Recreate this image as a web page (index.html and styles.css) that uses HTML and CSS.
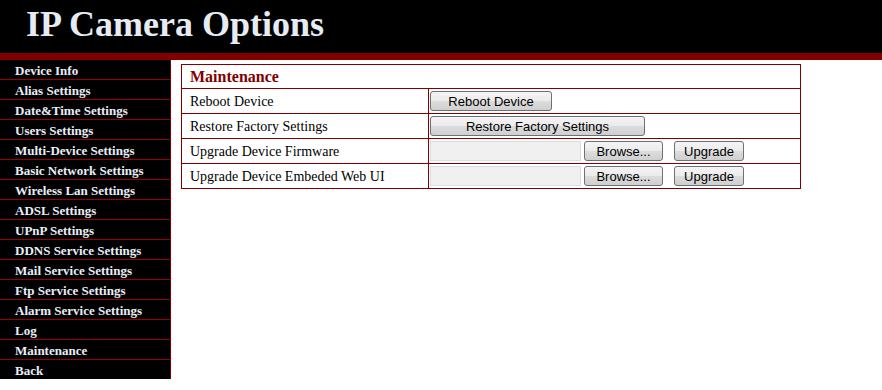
FILE: index.html
```html
<!DOCTYPE html>
<html lang="en">
<head>
    <meta charset="UTF-8">
    <title>IP Camera Options</title>
    <link rel="stylesheet" href="styles.css">
</head>
<body>
    <div class="header">
        <h1>IP Camera Options</h1>
    </div>
    <div class="page">
        <ul class="menu">
            <li>Device Info</li>
            <li>Alias Settings</li>
            <li>Date&amp;Time Settings</li>
            <li>Users Settings</li>
            <li>Multi-Device Settings</li>
            <li>Basic Network Settings</li>
            <li>Wireless Lan Settings</li>
            <li>ADSL Settings</li>
            <li>UPnP Settings</li>
            <li>DDNS Service Settings</li>
            <li>Mail Service Settings</li>
            <li>Ftp Service Settings</li>
            <li>Alarm Service Settings</li>
            <li>Log</li>
            <li>Maintenance</li>
            <li>Back</li>
        </ul>
        <div class="main">
            <table class="options">
                <tr><th colspan="2">Maintenance</th></tr>
                <tr>
                    <td class="label">Reboot Device</td>
                    <td><button class="btn btn-reboot">Reboot Device</button></td>
                </tr>
                <tr>
                    <td class="label">Restore Factory Settings</td>
                    <td><button class="btn btn-restore">Restore Factory Settings</button></td>
                </tr>
                <tr>
                    <td class="label">Upgrade Device Firmware</td>
                    <td>
                        <div class="upload">
                            <span class="file-box"></span>
                            <button class="btn btn-browse">Browse...</button>
                            <button class="btn btn-upgrade">Upgrade</button>
                        </div>
                    </td>
                </tr>
                <tr>
                    <td class="label">Upgrade Device Embeded Web UI</td>
                    <td>
                        <div class="upload">
                            <span class="file-box"></span>
                            <button class="btn btn-browse">Browse...</button>
                            <button class="btn btn-upgrade">Upgrade</button>
                        </div>
                    </td>
                </tr>
            </table>
        </div>
    </div>
</body>
</html>
```

FILE: styles.css
```css
body {
    margin: 0;
    font-family: 'Liberation Serif', 'Times New Roman', serif;
    background-color: #fff;
    color: #000;
}
.header {
    background-color: #000;
    height: 53px;
    border-bottom: 7px solid #800000;
}
.header h1 {
    margin: 0;
    padding: 2px 0 0 26px;
    font-size: 36px;
    line-height: 44px;
    color: #e6ecf4;
}
.page {
    display: flex;
    align-items: flex-start;
}
.menu {
    list-style: none;
    margin: 0;
    padding: 0;
    width: 170px;
    background-color: #000;
    border-right: 1px solid #800000;
}
.menu li {
    height: 19px;
    line-height: 22px;
    padding-left: 15px;
    font-size: 13px;
    font-weight: bold;
    color: #e8eef8;
    border-bottom: 1px solid #990000;
}
.menu li:last-child {
    border-bottom: none;
}
.main {
    padding: 4px 0 0 10px;
}
.options {
    width: 620px;
    border-collapse: collapse;
    border: 1px solid #800000;
}
.options th,
.options td {
    border: 1px solid #800000;
    height: 23px;
    padding: 1px 0 0 8px;
    text-align: left;
    font-size: 14px;
}
.options th {
    font-size: 16px;
    color: #800000;
    height: 22px;
}
.options td.label {
    width: 238px;
}
.options td + td {
    height: 24px;
    padding: 0 0 0 1px;
}
.btn {
    font-family: 'Liberation Sans', Arial, sans-serif;
    font-size: 13px;
    color: #000;
    height: 20px;
    padding: 0;
    border: 1px solid #707070;
    border-radius: 3px;
    background: linear-gradient(#f4f4f4 0%, #ebebeb 50%, #dddddd 51%, #cfcfcf 100%);
    vertical-align: middle;
}
.btn-reboot {
    width: 122px;
}
.btn-restore {
    width: 215px;
}
.upload {
    display: flex;
    align-items: center;
}
.file-box {
    width: 151px;
    height: 20px;
    background-color: #f0f0f0;
    border: 1px solid #dcdcdc;
    box-sizing: border-box;
}
.btn-browse {
    width: 79px;
    margin-left: 3px;
}
.btn-upgrade {
    width: 70px;
    margin-left: 11px;
}
```
